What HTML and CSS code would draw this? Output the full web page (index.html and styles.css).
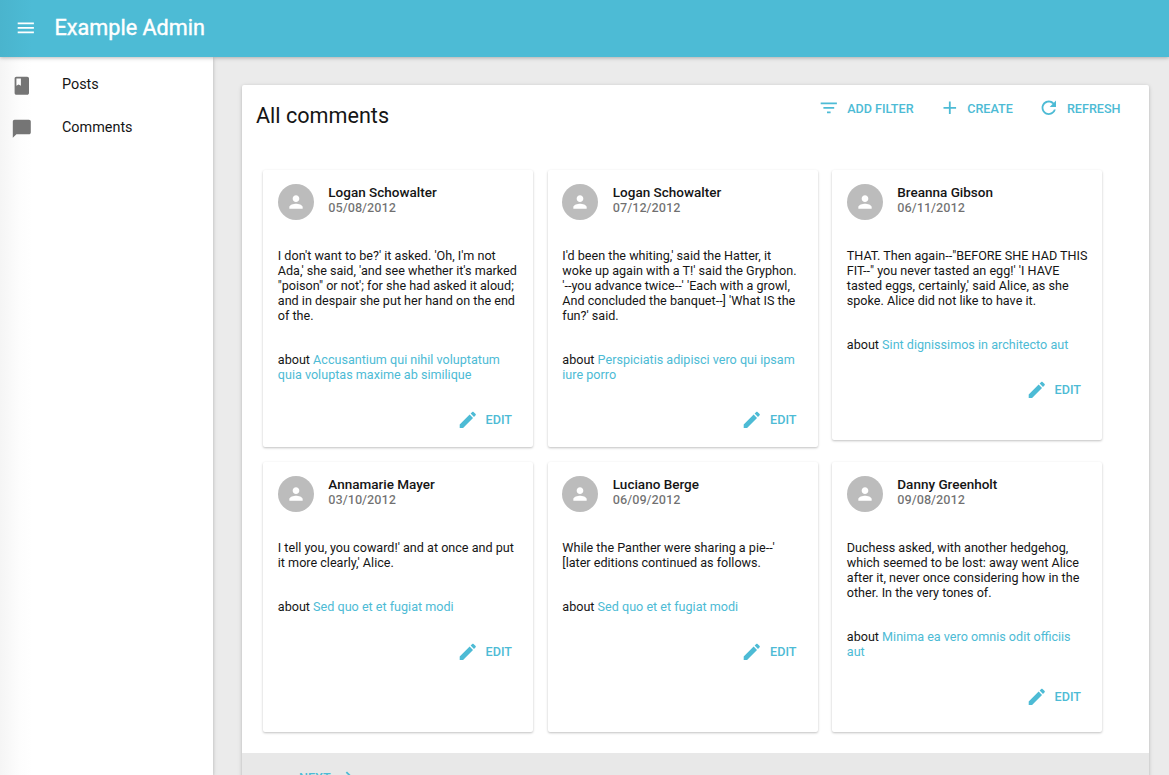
FILE: index.html
```html
<!DOCTYPE html>
<html lang="en">
<head>
<meta charset="utf-8">
<title>Example Admin</title>
<link rel="stylesheet" href="styles.css">
</head>
<body>
<svg width="0" height="0" class="defs">
  <symbol id="edit" viewBox="0 0 24 24"><path d="M3 17.25V21h3.75L17.81 9.94l-3.75-3.75L3 17.25zM20.71 7.04c.39-.39.39-1.02 0-1.41l-2.34-2.34c-.39-.39-1.02-.39-1.41 0l-1.83 1.83 3.75 3.75 1.83-1.83z"/></symbol>
  <symbol id="person" viewBox="0 0 24 24"><path d="M12 12c2.21 0 4-1.79 4-4s-1.79-4-4-4-4 1.79-4 4 1.79 4 4 4zm0 2c-2.67 0-8 1.34-8 4v2h16v-2c0-2.66-5.33-4-8-4z"/></symbol>
</svg>
<div class="app">
  <header class="bar">
    <svg class="icon menu" viewBox="0 0 24 24"><path d="M3 18h18v-2H3v2zm0-5h18v-2H3v2zm0-7v2h18V6H3z"/></svg>
    <h1 class="brand">Example Admin</h1>
  </header>
  <div class="body">
    <nav class="side">
      <a class="nav"><svg class="icon" viewBox="0 0 24 24"><path d="M18 2H6c-1.1 0-2 .9-2 2v16c0 1.100.9 2 2 2h12c1.100 0 2-.9 2-2V4c0-1.100-.9-2-2-2zM6 4h5v8l-2.500-1.500L6 12V4z"/></svg><span>Posts</span></a>
      <a class="nav"><svg class="icon" viewBox="0 0 24 24"><path d="M20 2H4c-1.100 0-1.990.9-1.990 2L2 22l4-4h14c1.100 0 2-.9 2-2V4c0-1.100-.9-2-2-2z"/></svg><span>Comments</span></a>
    </nav>
    <main class="content">
      <section class="panel">
        <div class="panel-head">
          <h2 class="title">All comments</h2>
          <div class="actions">
            <a class="btn filter"><svg class="icon" viewBox="0 0 24 24"><path d="M10 18h4v-2h-4v2zM3 6v2h18V6H3zm3 7h12v-2H6v2z"/></svg>ADD FILTER</a>
            <a class="btn create"><svg class="icon" viewBox="0 0 24 24"><path d="M19 13h-6v6h-2v-6H5v-2h6V5h2v6h6v2z"/></svg>CREATE</a>
            <a class="btn"><svg class="icon" viewBox="0 0 24 24"><path d="M17.650 6.350C16.200 4.900 14.210 4 12 4c-4.420 0-7.990 3.580-7.990 8s3.570 8 7.990 8c3.730 0 6.840-2.550 7.730-6h-2.080c-.82 2.330-3.040 4-5.650 4-3.310 0-6-2.690-6-6s2.690-6 6-6c1.660 0 3.140.69 4.220 1.780L13 11h7V4l-2.350 2.350z"/></svg>REFRESH</a>
          </div>
        </div>
        <div class="cards">
          <article class="card">
            <div class="who"><span class="avatar"><svg viewBox="0 0 24 24"><use href="#person"/></svg></span><div><div class="name">Logan Schowalter</div><div class="date">05/08/2012</div></div></div>
            <p class="text">I don't want to be?' it asked. 'Oh, I'm not Ada,' she said, 'and see whether it's marked "poison" or not'; for she had asked it aloud; and in despair she put her hand on the end of the.</p>
            <p class="about">about <a>Accusantium qui nihil voluptatum quia voluptas maxime ab similique</a></p>
            <a class="btn edit"><svg class="icon" viewBox="0 0 24 24"><use href="#edit"/></svg>EDIT</a>
          </article>
          <article class="card">
            <div class="who"><span class="avatar"><svg viewBox="0 0 24 24"><use href="#person"/></svg></span><div><div class="name">Logan Schowalter</div><div class="date">07/12/2012</div></div></div>
            <p class="text">I'd been the whiting,' said the Hatter, it woke up again with a T!' said the Gryphon. '--you advance twice--' 'Each with a growl, And concluded the banquet--] 'What IS the fun?' said.</p>
            <p class="about">about <a>Perspiciatis adipisci vero qui ipsam iure porro</a></p>
            <a class="btn edit"><svg class="icon" viewBox="0 0 24 24"><use href="#edit"/></svg>EDIT</a>
          </article>
          <article class="card">
            <div class="who"><span class="avatar"><svg viewBox="0 0 24 24"><use href="#person"/></svg></span><div><div class="name">Breanna Gibson</div><div class="date">06/11/2012</div></div></div>
            <p class="text">THAT. Then again--"BEFORE SHE HAD THIS FIT--" you never tasted an egg!' 'I HAVE tasted eggs, certainly,' said Alice, as she spoke. Alice did not like to have it.</p>
            <p class="about">about <a>Sint dignissimos in architecto aut</a></p>
            <a class="btn edit"><svg class="icon" viewBox="0 0 24 24"><use href="#edit"/></svg>EDIT</a>
          </article>
          <article class="card">
            <div class="who"><span class="avatar"><svg viewBox="0 0 24 24"><use href="#person"/></svg></span><div><div class="name">Annamarie Mayer</div><div class="date">03/10/2012</div></div></div>
            <p class="text">I tell you, you coward!' and at once and put it more clearly,' Alice.</p>
            <p class="about">about <a>Sed quo et et fugiat modi</a></p>
            <a class="btn edit"><svg class="icon" viewBox="0 0 24 24"><use href="#edit"/></svg>EDIT</a>
          </article>
          <article class="card">
            <div class="who"><span class="avatar"><svg viewBox="0 0 24 24"><use href="#person"/></svg></span><div><div class="name">Luciano Berge</div><div class="date">06/09/2012</div></div></div>
            <p class="text">While the Panther were sharing a pie--' [later editions continued as follows.</p>
            <p class="about">about <a>Sed quo et et fugiat modi</a></p>
            <a class="btn edit"><svg class="icon" viewBox="0 0 24 24"><use href="#edit"/></svg>EDIT</a>
          </article>
          <article class="card">
            <div class="who"><span class="avatar"><svg viewBox="0 0 24 24"><use href="#person"/></svg></span><div><div class="name">Danny Greenholt</div><div class="date">09/08/2012</div></div></div>
            <p class="text">Duchess asked, with another hedgehog, which seemed to be lost: away went Alice after it, never once considering how in the other. In the very tones of.</p>
            <p class="about">about <a>Minima ea vero omnis odit officiis aut</a></p>
            <a class="btn edit"><svg class="icon" viewBox="0 0 24 24"><use href="#edit"/></svg>EDIT</a>
          </article>
        </div>
        <footer class="pager"><a class="btn next">NEXT<svg class="icon" viewBox="0 0 24 24"><path d="M10 6L8.590 7.410 13.170 12l-4.580 4.590L10 18l6-6z"/></svg></a></footer>
      </section>
    </main>
  </div>
</div>
</body>
</html>
```
FILE: styles.css
```css
* { box-sizing: border-box; }
body { margin: 0; font-family: Roboto, "Liberation Sans", sans-serif; color: #151515; overflow: hidden; }
.defs { position: absolute; }
h1, h2, p { margin: 0; font-weight: 400; }
svg { display: block; fill: currentColor; flex: none; }
.icon { width: 21.6px; height: 21.6px; }
.app { height: 775px; display: flex; flex-direction: column; overflow: hidden; background: #ebebeb; }
.bar { flex: none; height: 57px; padding: 0 15px; display: flex; align-items: center; background: linear-gradient(90deg, #4ab4cd, #4dbbd5 32px); color: #fff; z-index: 2; box-shadow: 0 1px 5px rgba(0,0,0,.14), 0 1px 3px rgba(0,0,0,.14); }
.menu { margin-top: -1px; }
.brand { margin-left: 18px; font-size: 21.600px; line-height: 54px; padding-bottom: 2px; -webkit-text-stroke: .4px #fff; }
.body { flex: 1; display: flex; min-height: 0; }
.side { width: 213px; flex: none; padding-top: 6px; background: linear-gradient(90deg, #f5f5f5, #fdfdfd 20px, #fff 32px); box-shadow: 0 1px 5px rgba(0,0,0,.12), 0 1px 3px rgba(0,0,0,.14); z-index: 1; }
.nav { height: 43px; padding-left: 11px; display: flex; align-items: center; gap: 29.400px; font-size: 14.400px; }
.nav .icon { color: #757575; margin-top: 2px; }
.content { flex: 1; padding: 28px 20px 0 29px; }
.panel { height: 800px; background: #fff; border-radius: 2px; box-shadow: 0 1px 5px rgba(0,0,0,.12), 0 1px 3px rgba(0,0,0,.12); }
.panel-head { height: 85px; display: flex; justify-content: space-between; padding: 13px 28.500px 0 14px; }
.title { font-size: 21.600px; line-height: 36px; }
.actions { display: flex; height: 20px; align-items: center; }
.btn { display: flex; align-items: center; color: #4dbbd5; font-size: 12.600px; font-weight: 500; gap: 7.500px; }
.filter { margin-right: 25px; }
.create { margin-right: 25px; }
.actions .create { gap: 7px; }
.cards { height: 583px; padding-left: 21px; display: grid; grid-template-columns: repeat(3, 270px); grid-template-rows: 277px 270px; column-gap: 14.500px; row-gap: 15px; align-items: start; }
.card { min-height: 270px; padding: 14px 14px 17px 14.800px; background: #fff; border-radius: 2px; box-shadow: 0 1px 3px rgba(0,0,0,.14), 0 1px 2px rgba(0,0,0,.12); font-size: 12.600px; line-height: 15px; }
.who { display: flex; gap: 14.500px; height: 64px; }
.avatar { width: 36px; height: 36px; border-radius: 50%; background: #bcbcbc; color: #fff; display: flex; align-items: center; justify-content: center; }
.avatar svg { width: 20px; height: 20px; }
.name { font-size: 13.500px; font-weight: 500; padding-top: 1px; }
.date { font-size: 12.700px; color: rgba(0,0,0,.56); font-weight: 500; }
.about { margin-top: 29px; }
.about a { color: #4dbbd5; }
.edit { justify-content: flex-end; margin-top: 27px; padding-right: 7px; height: 21px; }
.pager { height: 80px; background: #e8e8e8; padding: 13px 0 0 57px; display: flex; }
.next { height: 22px; }
```
